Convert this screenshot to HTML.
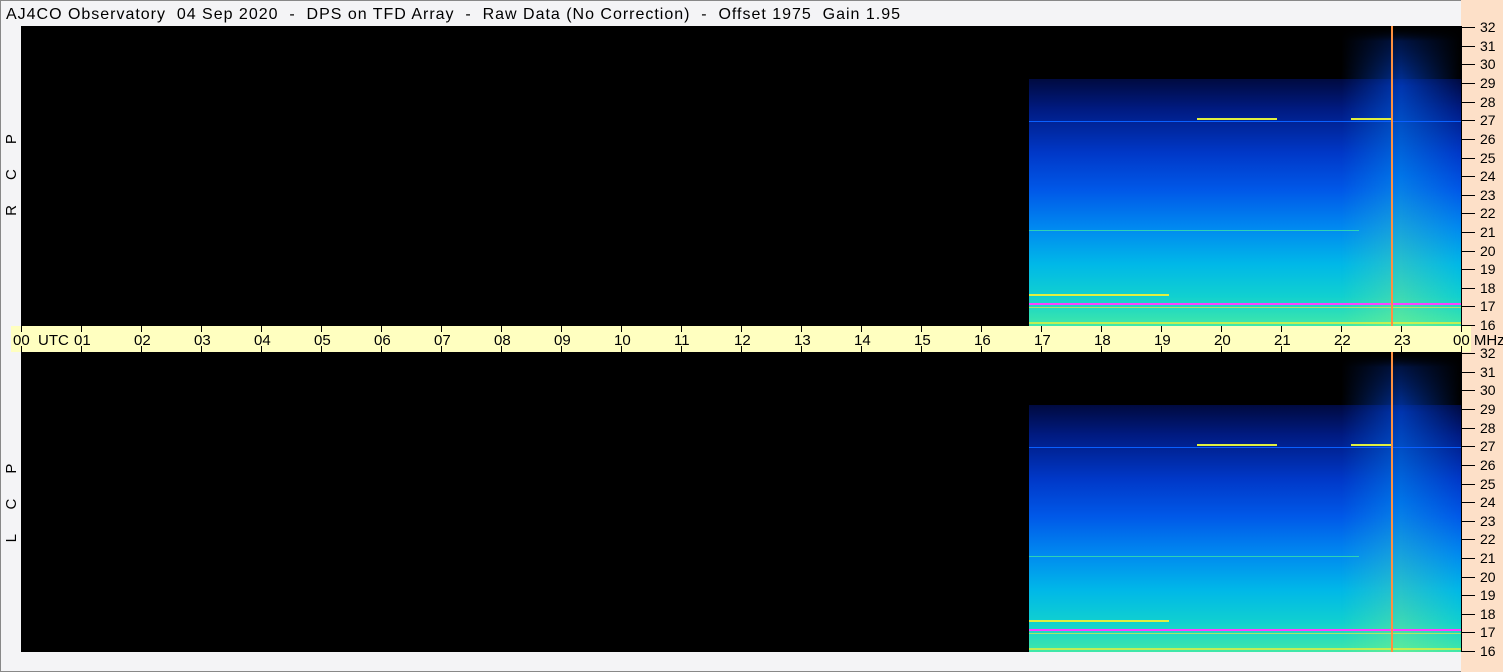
<!DOCTYPE html>
<html><head><meta charset="utf-8"><style>
html,body{margin:0;padding:0;background:#f4f4f6;}
svg{display:block;font-family:"Liberation Sans",sans-serif;}
text{white-space:pre;}
</style></head><body>
<svg width="1503" height="672" viewBox="0 0 1503 672" xmlns="http://www.w3.org/2000/svg" xml:space="preserve">
<defs>
<linearGradient id="g" x1="0" y1="0" x2="0" y2="1">
<stop offset="0" stop-color="#000a40"/>
<stop offset="0.12" stop-color="#001a80"/>
<stop offset="0.3" stop-color="#0038c8"/>
<stop offset="0.45" stop-color="#0058e8"/>
<stop offset="0.6" stop-color="#0088f0"/>
<stop offset="0.75" stop-color="#00b8e8"/>
<stop offset="0.88" stop-color="#10d0d0"/>
<stop offset="1" stop-color="#40e8a8"/>
</linearGradient>
<linearGradient id="g2" x1="0" y1="0" x2="0" y2="1">
<stop offset="0" stop-color="#000000" stop-opacity="0"/>
<stop offset="0.05" stop-color="#002070" stop-opacity="0.6"/>
<stop offset="0.2" stop-color="#0040c8" stop-opacity="0.8"/>
<stop offset="0.5" stop-color="#0090f0" stop-opacity="0.6"/>
<stop offset="1" stop-color="#70f090" stop-opacity="0.6"/>
</linearGradient>
<linearGradient id="gh" x1="0" y1="0" x2="1" y2="0">
<stop offset="0" stop-color="#fff" stop-opacity="0"/>
<stop offset="0.5" stop-color="#fff" stop-opacity="1"/>
<stop offset="1" stop-color="#fff" stop-opacity="0"/>
</linearGradient>
<mask id="mh"><rect x="1320" y="0" width="120" height="300" fill="url(#gh)"/></mask>
<g id="spec">
<rect x="0" y="0" width="1440" height="300" fill="#000"/>
<rect x="1008" y="53" width="432" height="247" fill="url(#g)"/>
<rect x="1320" y="0" width="120" height="300" fill="url(#g2)" mask="url(#mh)"/>
<rect x="1008" y="95" width="432" height="1" fill="#0a60ff"/>
<rect x="1176" y="92" width="80" height="2" fill="#e0f040"/>
<rect x="1330" y="92" width="40" height="2" fill="#e0f040"/>
<rect x="1008" y="204" width="330" height="1" fill="#40f0a0" opacity="0.7"/>
<rect x="1008" y="277" width="432" height="2" fill="#ff40ff"/>
<rect x="1008" y="281" width="432" height="1" fill="#e0f040" opacity="0.7"/>
<rect x="1008" y="268" width="140" height="2" fill="#e0f040"/>
<rect x="1008" y="296" width="432" height="2" fill="#e0f040" opacity="0.8"/>
<rect x="1370" y="0" width="2" height="300" fill="#ff9040"/>
</g>
</defs>
<text x="6" y="19" font-size="16" fill="#000" textLength="894" lengthAdjust="spacing">AJ4CO Observatory  04 Sep 2020  -  DPS on TFD Array  -  Raw Data (No Correction)  -  Offset 1975  Gain 1.95</text>
<rect x="0.5" y="0.5" width="1502" height="671" fill="none" stroke="#888"/>
<use href="#spec" x="21" y="26"/>
<use href="#spec" x="21" y="352"/>
<rect x="1461" y="0" width="42" height="672" fill="#fde0c8"/>
<rect x="1461" y="26" width="1" height="626" fill="#000"/>
<rect x="11" y="326" width="1460" height="26" fill="#ffffc0"/>
<text transform="translate(16 175) rotate(-90)" text-anchor="middle" font-size="15">R      C      P</text>
<text transform="translate(16 503) rotate(-90)" text-anchor="middle" font-size="15">L      C      P</text>
<g font-size="15" fill="#000">
<text x="13" y="345">00  UTC</text>
<text x="74" y="345">01</text><text x="134" y="345">02</text><text x="194" y="345">03</text><text x="254" y="345">04</text><text x="314" y="345">05</text><text x="374" y="345">06</text><text x="434" y="345">07</text><text x="494" y="345">08</text><text x="554" y="345">09</text><text x="614" y="345">10</text><text x="674" y="345">11</text><text x="734" y="345">12</text><text x="794" y="345">13</text><text x="854" y="345">14</text><text x="914" y="345">15</text><text x="974" y="345">16</text><text x="1034" y="345">17</text><text x="1094" y="345">18</text><text x="1154" y="345">19</text><text x="1214" y="345">20</text><text x="1274" y="345">21</text><text x="1334" y="345">22</text><text x="1394" y="345">23</text><text x="1453" y="345">00 MHz</text>
</g>
<g stroke="#000" stroke-width="1">
<path d="M21.5 326v6M21.5 346v6M81.5 326v6M81.5 346v6M141.5 326v6M141.5 346v6M201.5 326v6M201.5 346v6M261.5 326v6M261.5 346v6M321.5 326v6M321.5 346v6M381.5 326v6M381.5 346v6M441.5 326v6M441.5 346v6M501.5 326v6M501.5 346v6M561.5 326v6M561.5 346v6M621.5 326v6M621.5 346v6M681.5 326v6M681.5 346v6M741.5 326v6M741.5 346v6M801.5 326v6M801.5 346v6M861.5 326v6M861.5 346v6M921.5 326v6M921.5 346v6M981.5 326v6M981.5 346v6M1041.5 326v6M1041.5 346v6M1101.5 326v6M1101.5 346v6M1161.5 326v6M1161.5 346v6M1221.5 326v6M1221.5 346v6M1281.5 326v6M1281.5 346v6M1341.5 326v6M1341.5 346v6M1401.5 326v6M1401.5 346v6M1461.5 326v6M1461.5 346v6"/>
</g>
<g stroke="#000">
<path d="M1461 27.5h14M1461 46.5h14M1461 64.5h14M1461 83.5h14M1461 102.5h14M1461 120.5h14M1461 139.5h14M1461 158.5h14M1461 176.5h14M1461 195.5h14M1461 213.5h14M1461 232.5h14M1461 251.5h14M1461 269.5h14M1461 288.5h14M1461 306.5h14M1461 325.5h14"/>
<path d="M1461 353.5h14M1461 372.5h14M1461 390.5h14M1461 409.5h14M1461 428.5h14M1461 446.5h14M1461 465.5h14M1461 484.5h14M1461 502.5h14M1461 521.5h14M1461 539.5h14M1461 558.5h14M1461 577.5h14M1461 595.5h14M1461 614.5h14M1461 632.5h14M1461 651.5h14"/>
</g>
<g font-size="14" fill="#000">
<text x="1480" y="32">32</text><text x="1480" y="51">31</text><text x="1480" y="69">30</text><text x="1480" y="88">29</text><text x="1480" y="107">28</text><text x="1480" y="125">27</text><text x="1480" y="144">26</text><text x="1480" y="163">25</text><text x="1480" y="181">24</text><text x="1480" y="200">23</text><text x="1480" y="218">22</text><text x="1480" y="237">21</text><text x="1480" y="256">20</text><text x="1480" y="274">19</text><text x="1480" y="293">18</text><text x="1480" y="311">17</text><text x="1480" y="330">16</text>
<text x="1480" y="358">32</text><text x="1480" y="377">31</text><text x="1480" y="395">30</text><text x="1480" y="414">29</text><text x="1480" y="433">28</text><text x="1480" y="451">27</text><text x="1480" y="470">26</text><text x="1480" y="489">25</text><text x="1480" y="507">24</text><text x="1480" y="526">23</text><text x="1480" y="544">22</text><text x="1480" y="563">21</text><text x="1480" y="582">20</text><text x="1480" y="600">19</text><text x="1480" y="619">18</text><text x="1480" y="637">17</text><text x="1480" y="656">16</text>
</g>
</svg>
</body></html>
